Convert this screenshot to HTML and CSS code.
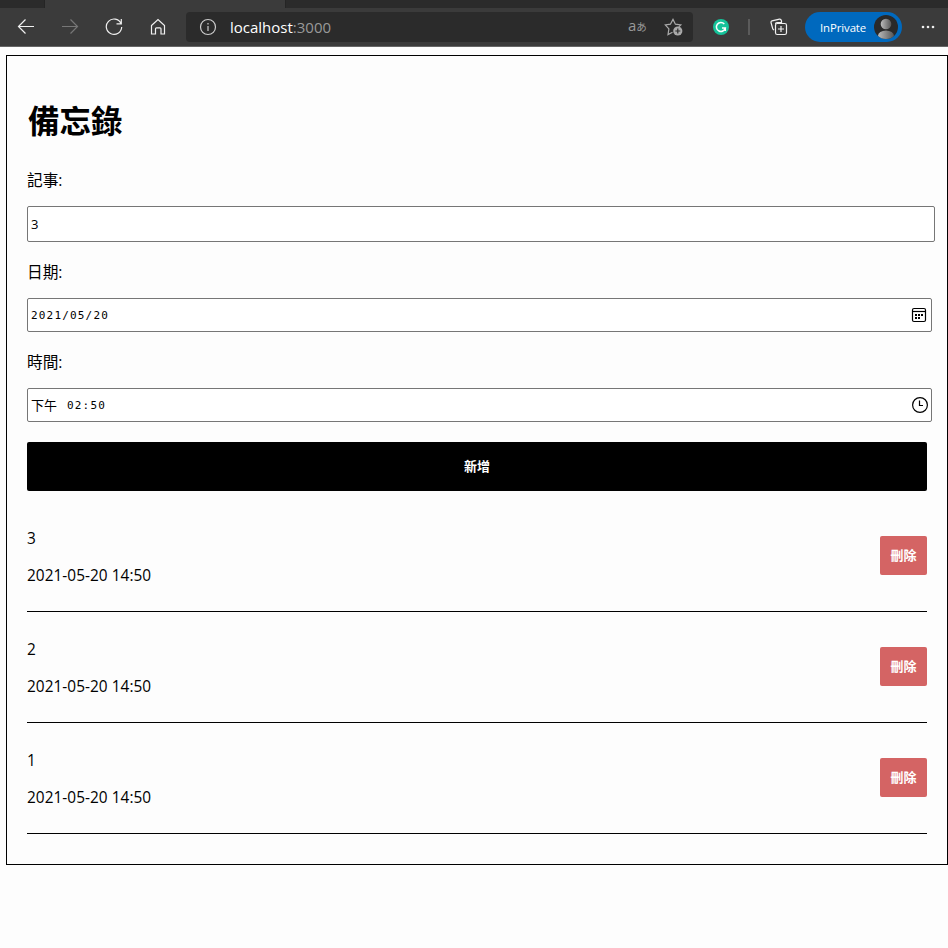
FILE: index.html
```html
<!DOCTYPE html>
<html lang="zh-Hant">
<head>
<meta charset="utf-8">
<title>備忘錄</title>
<link rel="stylesheet" href="styles.css">
</head>
<body>
<header class="browser">
  <div class="tabs"><div class="tab-active"></div></div>
  <div class="toolbar">
    <div class="nav">
      <svg width="18" height="18" viewBox="0 0 18 18"><path d="M17 8.500H1.500M8.500 1.500L1.500 8.500l7 7"/></svg>
      <svg class="dim" width="18" height="18" viewBox="0 0 18 18"><path d="M1 8.500h15.500M9.500 1.500l7 7-7 7"/></svg>
      <svg width="18" height="18" viewBox="0 0 18 18"><path d="M16 5.500A7.700 7.700 0 1 0 16.700 9M16.300 1v4.800h-4.800"/></svg>
      <svg width="18" height="18" viewBox="0 0 18 18"><path d="M2.500 7.500L9 1.600l6.500 5.900v8.500h-3.500v-5.200q0-1-1-1H7.500q-1 0-1 1v5.200H2.500z"/></svg>
    </div>
    <div class="address">
      <svg width="18" height="18" viewBox="0 0 18 18"><circle cx="9" cy="9" r="7.500"/><path d="M9 8v5M9 5v1.500"/></svg>
      <span class="url">localhost<span class="port">:3000</span></span>
      <span class="lang">a<small>あ</small></span>
      <svg class="star" width="20" height="20" viewBox="0 0 20 20"><path d="M8.500 15.200L4 17.600l.9-5.700L1.300 8l5.100-.8L9 2.400l2.400 4.800 5.400.7-2 2"/><circle class="star-dot" cx="13.800" cy="14" r="4.600"/><path class="star-plus" d="M13.800 11.500v5M11.300 14h5"/></svg>
    </div>
    <div class="extension"><svg width="16" height="16" viewBox="0 0 16 16"><circle cx="8" cy="8" r="8"/><path d="M11.300 5A4.500 4.500 0 1 0 12.300 9H9M12.300 9v3"/></svg></div>
    <div class="divider"></div>
    <svg class="collections" width="18" height="18" viewBox="0 0 18 18"><path d="M4 12.200L2.800 11 1 4.500Q.8 3.200 2 2.800L9.500 1.200q1.500-.2 2 1.800v1.500H7q-1.500 0-1.500 1.500"/><rect x="5.500" y="5.500" width="11" height="11" rx="1.800"/><path d="M11 8v6M8 11h6"/></svg>
    <div class="private"><span>InPrivate</span>
      <svg width="24" height="24" viewBox="0 0 24 24"><defs><linearGradient id="face"><stop offset="0" stop-color="#bbb"/><stop offset="1" stop-color="#555"/></linearGradient><clipPath id="disc"><circle cx="12" cy="12" r="12"/></clipPath></defs><g clip-path="url(#disc)"><path class="disc" d="M0 0h24v24H0z"/><circle cx="12" cy="9" r="5.300" fill="url(#face)"/><ellipse cx="12" cy="21" rx="8" ry="5.500" fill="url(#face)"/></g></svg>
    </div>
    <svg class="more" width="14" height="4" viewBox="0 0 14 4"><circle cx="2" cy="2" r="1.300"/><circle cx="7" cy="2" r="1.300"/><circle cx="12" cy="2" r="1.300"/></svg>
  </div>
</header>
<main class="memo">
  <h1>備忘錄</h1>
  <label>記事:</label>
  <div class="field note">3</div>
  <label>日期:</label>
  <div class="field date"><span class="mono">2021/05/20</span>
    <svg width="16" height="16" viewBox="0 0 16 16"><rect x="1.500" y="1.500" width="13" height="13" rx="1.500"/><path d="M2 4.500h12"/><path class="dots" d="M4 7h2v2H4zM7 7h2v2H7zM10 7h2v2h-2zM4 10h2v2H4zM7 10h2v2H7z"/></svg>
  </div>
  <label>時間:</label>
  <div class="field time"><span class="half">下午</span><span class="mono">02:50</span>
    <svg width="16" height="16" viewBox="0 0 16 16"><circle cx="8" cy="8" r="7.400"/><path d="M7.500 3.500v5H11"/></svg>
  </div>
  <button class="add"><span>新增</span></button>
  <ul>
    <li><div><p>3</p><p>2021-05-20 14:50</p></div><button class="remove"><span>刪除</span></button></li>
    <li><div><p>2</p><p>2021-05-20 14:50</p></div><button class="remove"><span>刪除</span></button></li>
    <li><div><p>1</p><p>2021-05-20 14:50</p></div><button class="remove"><span>刪除</span></button></li>
  </ul>
</main>
</body>
</html>
```
FILE: styles.css
```css
* { box-sizing: border-box; }
body {
  margin: 0;
  height: 948px;
  background: #fdfdfd;
  color: #000;
  font-family: "Open Sans", "Noto Sans CJK TC", sans-serif;
  font-size: 15.4px;
  overflow: hidden;
}
svg { display: block; flex: none; fill: none; stroke: #f0f0f0; stroke-width: 1.2; }
.browser { height: 47px; background: #3b3b3b; border-bottom: 1px solid #666; }
.tabs { height: 8px; background: #2b2b2b; }
.tab-active { width: 240px; height: 8px; margin-left: 45px; background: #3b3b3b; box-shadow: 0 0 1px #111; clip-path: inset(0 -1px 0 -1px); }
.toolbar { height: 38px; display: flex; align-items: center; }
.nav { display: flex; gap: 26px; margin-left: 17px; width: 169px; flex: none; }
.dim { stroke: #777; }
.address { width: 507px; height: 30px; border-radius: 4px; background: #2b2b2b; display: flex; align-items: center; padding-left: 13px; flex: none; }
.address svg { stroke: #ccc; }
.url { color: #fff; font-size: 15px; line-height: 20px; margin-left: 13px; width: 398px; white-space: nowrap; }
.port { color: #999; }
.lang { color: #999; font-size: 15px; line-height: 18px; width: 36px; white-space: nowrap; padding-bottom: 2px; }
.lang small { font-size: 10.500px; }
.address .star { stroke: #aaa; }
.star .star-dot { fill: #aaa; stroke: none; }
.star .star-plus { stroke: #2b2b2b; }
.extension { margin-left: 20px; }
.extension svg { fill: #15c39a; stroke: none; }
.extension path { fill: none; stroke: #fff; stroke-width: 1.5; }
.divider { width: 2px; height: 16px; background: #5b5b5b; margin-left: 19px; }
.collections { margin-left: 20px; }
.private { width: 97px; height: 30px; border-radius: 15px; background: #0069be; color: #fff; display: flex; align-items: center; margin-left: 17px; padding-left: 15px; font-size: 11.4px; flex: none; }
.private span { width: 54px; white-space: nowrap; letter-spacing: -0.1px; }
.private svg { stroke: none; }
.disc { fill: #292929; }
.more { margin-left: 19px; fill: #eee; stroke: none; }
.memo { width: 942px; height: 810px; margin: 8px 0 0 6px; border: 1px solid #000; padding: 42px 20px 0; }
h1 { margin: 0 0 0 1px; height: 46px; line-height: 46px; font-size: 31.5px; font-weight: 700; }
label { display: block; height: 22px; line-height: 22px; margin-top: 25px; font-size: 15.7px; }
.field { border: 1px solid #767676; border-radius: 2px; background: #fff; display: flex; align-items: center; padding-left: 3px; font-size: 13px; }
.field svg { stroke: #000; margin-left: auto; }
.note { width: 908px; height: 36px; margin-top: 15px; padding-bottom: 1px; }
.note + label { margin-top: 19px; }
.date, .time { width: 905px; height: 34px; margin-top: 15px; }
.date { padding-right: 4px; }
.time { padding-right: 3px; }
.date + label { margin-top: 19px; }
.mono { font-family: "DejaVu Sans Mono", monospace; font-size: 11px; line-height: 16px; letter-spacing: 1.18px; padding-top: 1px; }
.time .mono { padding-top: 2px; }
.half { width: 36px; line-height: 20px; }
.field .dots { fill: #000; stroke: none; }
button { display: flex; align-items: center; justify-content: center; border: 0; border-radius: 2px; color: #fff; font-family: inherit; font-size: 13px; font-weight: 700; padding: 0 0 2px; }
.add { width: 900px; height: 49px; margin-top: 20px; background: #000; }
ul { list-style: none; margin: 10px 0 0; padding: 0; width: 900px; }
li { display: flex; justify-content: space-between; height: 111px; border-bottom: 1px solid #000; padding-top: 27px; }
p { margin: 0 0 15px; height: 22px; line-height: 22px; letter-spacing: 0.04px; }
.remove { width: 47px; height: 39px; margin-top: 8px; background: #d46464; }
```
